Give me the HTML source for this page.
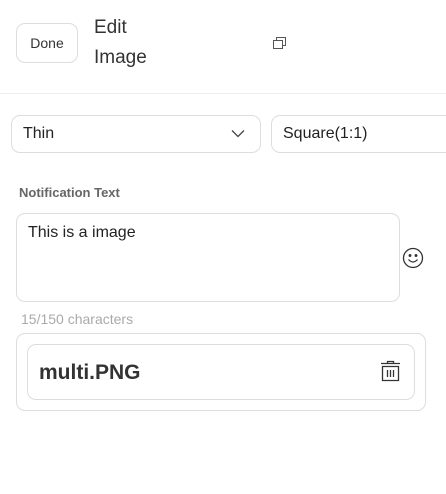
<html><head><style>
body{margin:0;width:446px;height:494px;background:#fff;font-family:"Liberation Sans",sans-serif;position:relative;overflow:hidden;color:#222}
.a{position:absolute;box-sizing:border-box}
</style></head><body>
<div class="a" style="left:16px;top:23px;width:62px;height:40px;border:1px solid #ddd;border-radius:9px;font-size:14px;color:#333;text-align:center;line-height:38px">Done</div>
<div class="a" style="left:94px;top:13px;font-size:19px;line-height:30px;color:#333">Edit<br>Image</div>
<svg class="a" style="left:272px;top:36px" width="16" height="14" viewBox="0 0 16 14" fill="none" stroke="#555" stroke-width="1"><rect x="1.5" y="4.5" width="9" height="8"/><path d="M4.5 4.5V1.5H13.5V9.5H10.5"/></svg>
<div class="a" style="left:0;top:93px;width:446px;height:1px;background:#eee"></div>
<div class="a" style="left:11px;top:115px;width:250px;height:38px;border:1px solid #ddd;border-radius:9px;font-size:16px;line-height:36px;padding-left:11px;color:#222">Thin</div>
<svg class="a" style="left:231px;top:129px" width="14" height="9" viewBox="0 0 14 9" fill="none" stroke="#444" stroke-width="1.3"><path d="M1 1.5L7 7.5L13 1.5"/></svg>
<div class="a" style="left:271px;top:115px;width:190px;height:38px;border:1px solid #ddd;border-radius:9px;font-size:16px;line-height:36px;padding-left:11px;color:#222">Square(1:1)</div>
<div class="a" style="left:19px;top:185px;font-size:13px;font-weight:bold;color:#666">Notification Text</div>
<div class="a" style="left:16px;top:213px;width:384px;height:89px;border:1px solid #ddd;border-radius:9px;font-size:16px;padding:10px 0 0 11px;color:#222">This is a image</div>
<svg class="a" style="left:402px;top:247px" width="22" height="22" viewBox="0 0 22 22" fill="none" stroke="#333" stroke-width="1.3"><circle cx="11" cy="11" r="9.5"/><circle cx="8" cy="8.5" r=".8" fill="#333"/><circle cx="14" cy="8.5" r=".8" fill="#333"/><path d="M6.5 12.5Q11 17.5 15.5 12.5"/></svg>
<div class="a" style="left:21px;top:311px;font-size:14px;color:#aaa">15/150 characters</div>
<div class="a" style="left:16px;top:333px;width:410px;height:78px;border:1px solid #ddd;border-radius:9px"></div>
<div class="a" style="left:27px;top:344px;width:388px;height:56px;border:1px solid #ddd;border-radius:9px;font-size:21px;font-weight:bold;line-height:56px;padding-left:11px;color:#333">multi.PNG</div>
<svg class="a" style="left:380px;top:360px" width="21" height="22" viewBox="0 0 21 22" fill="none" stroke="#333" stroke-width="1.3"><path d="M1 3.5H20M7.5 3.5V1.5H13.5V3.5"/><path d="M2.5 6.5H18.5V20.5H2.5Z"/><path d="M7.5 10V17M10.5 10V17M13.5 10V17"/></svg>
</body></html>
